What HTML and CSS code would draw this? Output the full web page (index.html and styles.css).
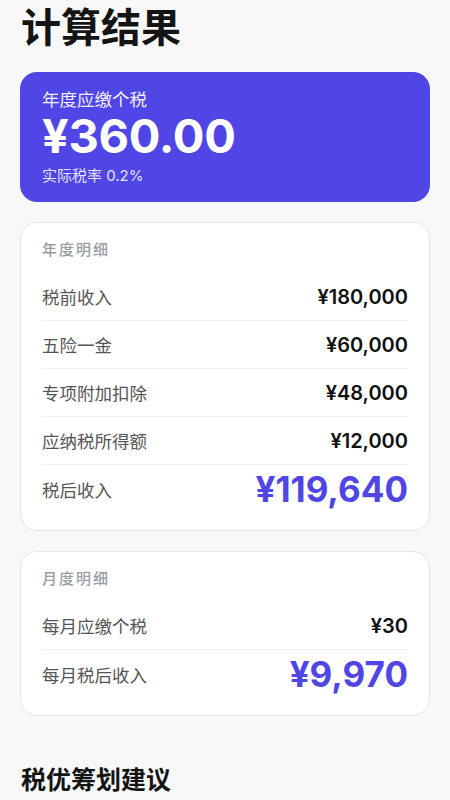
FILE: index.html
```html
<!DOCTYPE html>
<html lang="zh">
<head>
<meta charset="utf-8">
<link rel="stylesheet" href="styles.css">
</head>
<body>
<div class="page">
  <h1 class="title">计算结果</h1>
  <section class="hero">
    <div class="hero-label">年度应缴个税</div>
    <div class="hero-amount">¥360.00</div>
    <div class="hero-rate">实际税率 0.2%</div>
  </section>
  <section class="card">
    <div class="card-head">年度明细</div>
    <div class="row"><span class="label">税前收入</span><span class="value">¥180,000</span></div>
    <div class="row"><span class="label">五险一金</span><span class="value">¥60,000</span></div>
    <div class="row"><span class="label">专项附加扣除</span><span class="value">¥48,000</span></div>
    <div class="row"><span class="label">应纳税所得额</span><span class="value">¥12,000</span></div>
    <div class="row"><span class="label">税后收入</span><span class="value big">¥119,640</span></div>
  </section>
  <section class="card">
    <div class="card-head">月度明细</div>
    <div class="row"><span class="label">每月应缴个税</span><span class="value">¥30</span></div>
    <div class="row"><span class="label">每月税后收入</span><span class="value big">¥9,970</span></div>
  </section>
  <h2 class="subtitle">税优筹划建议</h2>
</div>
</body>
</html>
```

FILE: styles.css
```css
* { box-sizing: border-box; }
html, body { margin: 0; padding: 0; }
body {
  background: #f8f8f9;
  font-family: Inter, "Noto Sans CJK SC", sans-serif;
  color: #111;
}
.page {
  padding: 4px 20px 0;
  display: flex;
  flex-direction: column;
}
.title {
  margin: 0;
  font-size: 40px;
  line-height: 48px;
  font-weight: 700;
  color: #141414;
  padding-left: 1px;
}
.hero {
  margin-top: 20px;
  background: #4f46e5;
  border-radius: 17px;
  padding: 16px 22px 0;
  height: 130px;
  color: #fff;
}
.hero-label {
  font-size: 17.5px;
  line-height: 24px;
  opacity: 0.92;
}
.hero-amount {
  font-size: 47px;
  font-weight: 700;
  line-height: 48px;
  letter-spacing: -0.3px;
}
.hero-rate {
  font-size: 15px;
  line-height: 20px;
  margin-top: 6px;
  opacity: 0.85;
}
.card {
  margin-top: 20px;
  background: #fff;
  border: 1px solid #e6e6e8;
  border-radius: 17px;
  padding: 17px 21px 17px;
}
.card-head {
  font-size: 15px;
  line-height: 20px;
  font-weight: 500;
  color: #9a9ca3;
  letter-spacing: 2px;
  margin-bottom: 13px;
}
.row {
  display: flex;
  justify-content: space-between;
  align-items: center;
  min-height: 48px;
  border-bottom: 1px solid #f0f0f2;
}
.row:last-child { border-bottom: none; }
.label {
  font-size: 17.5px;
  color: #555;
}
.value {
  font-size: 20px;
  font-weight: 600;
  color: #111;
}
.value.big {
  font-size: 35px;
  font-weight: 700;
  color: #4f46e5;
  line-height: 40px;
}
.subtitle {
  margin: 48px 0 0;
  padding-left: 1px;
  font-size: 25px;
  line-height: 32px;
  font-weight: 700;
  color: #141414;
}
```
